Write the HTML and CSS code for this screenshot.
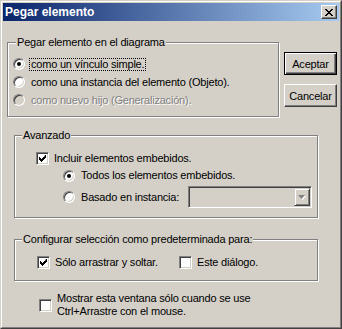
FILE: index.html
```html
<!DOCTYPE html>
<html lang="es">
<head>
  <meta charset="UTF-8">
  <title>Pegar elemento</title>
  <link rel="stylesheet" href="styles.css">
</head>
<body>
  <div class="window">
    <div class="window-inner">
      <div class="titlebar">
        <span class="title">Pegar elemento</span>
        <span class="close">
          <svg width="8" height="7" viewBox="0 0 8 7">
            <path d="M0 0h2v1h1v1h2v-1h1v-1h2v1h-1v1h-1v1h-1v1h1v1h1v1h1v1h-2v-1h-1v-1h-2v1h-1v1h-2v-1h1v-1h1v-1h1v-1h-1v-1h-1v-1h-1z" fill="#000"/>
          </svg>
        </span>
      </div>

      <div class="client">
        <div class="top-row">
          <div class="group group-paste">
            <div class="group-title">Pegar elemento en el diagrama</div>
            <div class="group-body">
              <div class="option">
                <span class="radio checked"></span>
                <span class="label focused">como un vínculo simple.</span>
              </div>
              <div class="option">
                <span class="radio"></span>
                <span class="label">como una instancia del elemento (Objeto).</span>
              </div>
              <div class="option disabled">
                <span class="radio"></span>
                <span class="label">como nuevo hijo (Generalización).</span>
              </div>
            </div>
          </div>

          <div class="buttons">
            <div class="btn btn-default">Aceptar</div>
            <div class="btn">Cancelar</div>
          </div>
        </div>

        <div class="group group-wide group-advanced">
          <div class="group-title">Avanzado</div>
          <div class="group-body">
            <div class="option">
              <span class="check">
                <svg width="7" height="7" viewBox="0 0 7 7"><path d="M6 0h1v3h-1v1h-1v1h-1v1h-1v1h-1v-1h-1v-1h-1v-3h1v1h1v1h1v-1h1v-1h1z" fill="#000"/></svg>
              </span>
              <span class="label">Incluir elementos embebidos.</span>
            </div>
            <div class="option sub">
              <span class="radio checked"></span>
              <span class="label">Todos los elementos embebidos.</span>
            </div>
            <div class="option sub combo-row">
              <span class="radio"></span>
              <span class="label">Basado en instancia:</span>
              <span class="combo">
                <span class="combo-btn">
                  <svg width="8" height="5" viewBox="0 0 8 5">
                    <path d="M1 1h7l-3.5 4z" fill="#fff"/>
                    <path d="M0 0h7l-3.5 4z" fill="#808080"/>
                  </svg>
                </span>
              </span>
            </div>
          </div>
        </div>

        <div class="group group-wide group-default">
          <div class="group-title">Configurar selección como predeterminada para:</div>
          <div class="group-body">
            <div class="option option-first">
              <span class="check">
                <svg width="7" height="7" viewBox="0 0 7 7"><path d="M6 0h1v3h-1v1h-1v1h-1v1h-1v1h-1v-1h-1v-1h-1v-3h1v1h1v1h1v-1h1v-1h1z" fill="#000"/></svg>
              </span>
              <span class="label">Sólo arrastrar y soltar.</span>
            </div>
            <div class="option">
              <span class="check"></span>
              <span class="label">Este diálogo.</span>
            </div>
          </div>
        </div>

        <div class="footer">
          <span class="check"></span>
          <span class="label">Mostrar esta ventana sólo cuando se use<br>Ctrl+Arrastre con el mouse.</span>
        </div>
      </div>
    </div>
  </div>
</body>
</html>
```

FILE: styles.css
```css
* {
  box-sizing: border-box;
  margin: 0;
  padding: 0;
}

body {
  font-family: "Liberation Sans", Arial, sans-serif;
  font-size: 11px;
  letter-spacing: -0.2px;
  color: #000;
  background: #d4d0c8;
}

.window {
  width: 342px;
  height: 329px;
  border: 1px solid;
  border-color: #d4d0c8 #404040 #404040 #d4d0c8;
  background: #d4d0c8;
}

.window-inner {
  height: 100%;
  border: 1px solid;
  border-color: #fff #808080 #808080 #fff;
  padding: 1px;
}

.titlebar {
  display: flex;
  align-items: center;
  height: 18px;
  padding-left: 2px;
  background: linear-gradient(to right, #0a246a, #a6caf0);
  color: #fff;
  font-weight: bold;
  font-size: 12px;
  letter-spacing: 0;
}

.title {
  flex: 1;
  line-height: 18px;
}

.close {
  display: flex;
  align-items: center;
  justify-content: center;
  width: 16px;
  height: 14px;
  margin-right: 2px;
  background: #d4d0c8;
  border: 1px solid;
  border-color: #fff #404040 #404040 #fff;
  box-shadow: inset -1px -1px #808080;
}

.client {
  padding-top: 21px;
}

.top-row {
  display: flex;
  align-items: flex-start;
  margin-left: 4px;
}

/* etched frame */
.group {
  border: 1px solid #808080;
  box-shadow: inset 1px 1px #fff, 1px 1px #fff;
}

.group-title {
  width: fit-content;
  margin: -7px 0 0 8px;
  padding: 0 1px;
  line-height: 13px;
  background: #d4d0c8;
}

.group-wide {
  width: 304px;
  margin-left: 11px;
}

.group-wide .group-title {
  margin-left: 7px;
}

.group-paste {
  width: 272px;
  height: 75px;
}

.group-paste .group-body {
  padding: 6px 0 0 5px;
}

.group-paste .option {
  height: 18px;
}

.option {
  display: flex;
  align-items: center;
  height: 17px;
}

.label {
  padding: 0 1px;
  border: 1px dotted transparent;
  line-height: 11px;
  white-space: nowrap;
}

.label.focused {
  border-color: #000;
}

.disabled .label {
  color: #808080;
  text-shadow: 1px 1px #fff;
}

.radio {
  display: flex;
  align-items: center;
  justify-content: center;
  width: 12px;
  height: 12px;
  margin-right: 4px;
  border-radius: 50%;
  border: 1px solid;
  border-color: #808080 #fff #fff #808080;
  box-shadow: inset 1px 1px #404040, inset -1px -1px #d4d0c8;
  background: #fff;
  flex-shrink: 0;
}

.radio.checked::after {
  content: "";
  width: 4px;
  height: 4px;
  border-radius: 50%;
  background: #000;
}

.disabled .radio {
  background: #d4d0c8;
}

.check {
  display: flex;
  align-items: center;
  justify-content: center;
  width: 13px;
  height: 13px;
  margin-right: 3px;
  border: 1px solid;
  border-color: #808080 #fff #fff #808080;
  box-shadow: inset 1px 1px #404040, inset -1px -1px #d4d0c8;
  background: #fff;
  flex-shrink: 0;
}

.buttons {
  display: flex;
  flex-direction: column;
  gap: 9px;
  margin: 10px 0 0 5px;
}

.btn {
  display: flex;
  align-items: center;
  justify-content: center;
  width: 53px;
  height: 23px;
  border: 1px solid;
  border-color: #fff #404040 #404040 #fff;
  box-shadow: inset -1px -1px #808080;
}

.btn-default {
  border-color: #000;
  box-shadow: inset 1px 1px #fff, inset -1px -1px #404040, inset -2px -2px #808080;
}

.group-advanced {
  height: 83px;
  margin-top: 18px;
}

.group-advanced .group-body {
  padding: 8px 5px 0 21px;
}

.option.sub {
  padding-left: 27px;
}

.combo-row {
  height: 22px;
  margin-top: 2px;
}

.combo {
  display: flex;
  justify-content: flex-end;
  align-items: center;
  width: 124px;
  height: 22px;
  margin-left: auto;
  padding-right: 1px;
  border: 1px solid;
  border-color: #808080 #fff #fff #808080;
  box-shadow: inset 1px 1px #404040, inset -1px -1px #d4d0c8;
  background: #d4d0c8;
}

.combo-btn {
  display: flex;
  align-items: center;
  justify-content: center;
  width: 16px;
  height: 18px;
  border: 1px solid;
  border-color: #d4d0c8 #404040 #404040 #d4d0c8;
  box-shadow: inset 1px 1px #fff, inset -1px -1px #808080;
}

.group-default {
  height: 42px;
  margin-top: 21px;
}

.group-default .group-body {
  display: flex;
  padding: 8px 0 0 22px;
}

.option-first {
  width: 142px;
}

.footer {
  display: flex;
  align-items: center;
  margin: 10px 0 0 36px;
}

.footer .label {
  line-height: 13px;
}
```
